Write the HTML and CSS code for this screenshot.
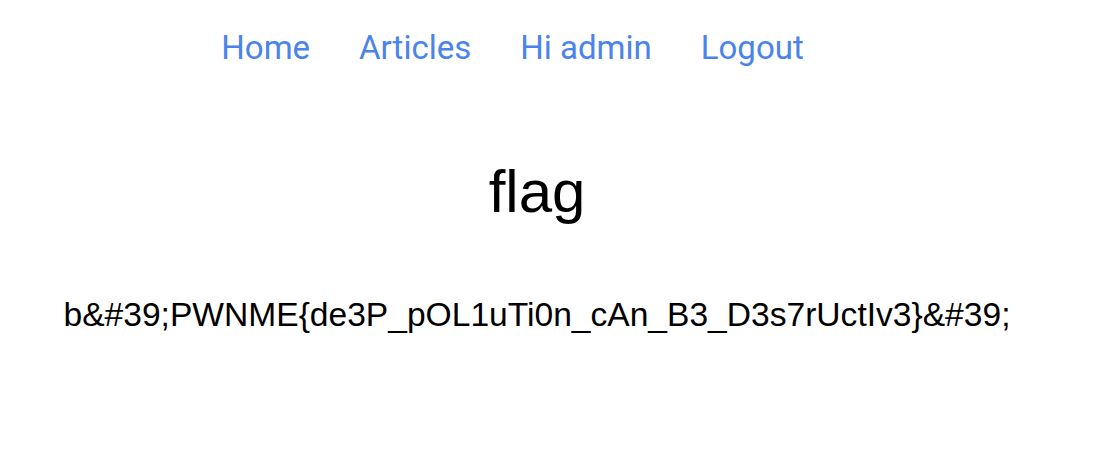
FILE: index.html
```html
<!DOCTYPE html>
<html lang="en">
<head>
    <meta charset="UTF-8">
    <meta name="viewport" content="width=device-width, initial-scale=1.0">
    <title>flag</title>
    <link rel="stylesheet" href="styles.css">
</head>
<body>

<div class="page">
    <nav class="nav">
        <a href="#">Home</a>
        <a href="#">Articles</a>
        <a href="#">Hi admin</a>
        <a href="#">Logout</a>
    </nav>

    <h1 class="title">flag</h1>

    <p class="content">b&amp;#39;PWNME{de3P_pOL1uTi0n_cAn_B3_D3s7rUctIv3}&amp;#39;</p>
</div>

</body>
</html>
```

FILE: styles.css
```css
body {
    margin: 0;
    background: #ffffff;
    color: #000000;
    font-family: 'Liberation Sans', Arial, sans-serif;
}

.page {
    width: 1074px;
    display: flex;
    flex-direction: column;
    align-items: center;
}

.nav {
    display: flex;
    padding-top: 28px;
}

.nav a {
    font-family: Roboto, 'Liberation Sans', sans-serif;
    font-size: 33px;
    color: #4a84ea;
    text-decoration: none;
    margin-right: 49px;
}

.title {
    font-size: 60px;
    font-weight: normal;
    margin: 90px 0 0;
}

.content {
    font-size: 33.6px;
    margin: 70px 0 0;
}
```
